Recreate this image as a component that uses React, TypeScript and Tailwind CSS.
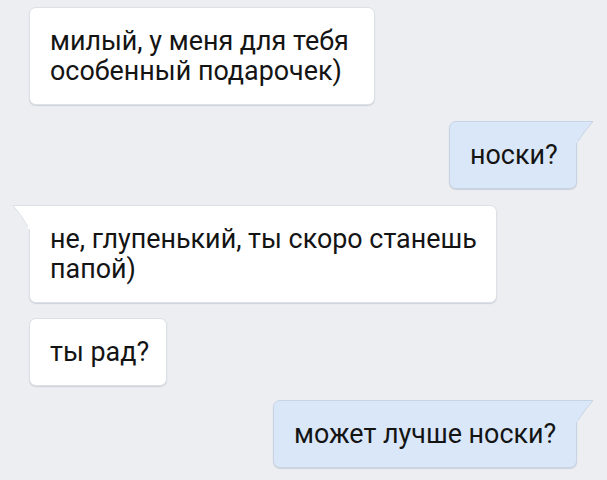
import type { ReactNode } from "react";

type Tail = "left" | "right" | "none";

// the source screenshot is a little stretched vertically, so the text is squeezed slightly to match
function Bubble({ mine, tail = "none", className = "", children }: { mine?: boolean; tail?: Tail; className?: string; children: ReactNode }) {
  const color = mine ? "bg-[#d9e7f8] border-[#c7d4e4]" : "bg-white border-[#dde1e7]";
  return (
    <div className={`relative ${mine ? "self-end" : "self-start"} ${className}`}>
      {tail === "right" && (
        <svg className="absolute top-0 right-[-17px]" width="18" height="22" viewBox="0 0 18 22">
          <path d="M0 0.5 H17 Q10 8 1 21.5 V0.5 Z" fill="#d9e7f8" stroke="#c7d4e4" strokeWidth="1" />
          <rect x="0" y="1" width="2" height="21" fill="#d9e7f8" />
        </svg>
      )}
      {tail === "left" && (
        <svg className="absolute top-0 left-[-17px]" width="18" height="24" viewBox="0 0 18 24">
          <path d="M18 0.5 H1 Q9 9 17 23.5 V0.5 Z" fill="#ffffff" stroke="#dde1e7" strokeWidth="1" />
          <rect x="16" y="1" width="2" height="23" fill="#ffffff" />
        </svg>
      )}
      <div
        className={`border ${color} rounded-[7px] ${tail === "right" ? "rounded-tr-none" : ""} ${tail === "left" ? "rounded-tl-none" : ""} shadow-[0_1px_1px_rgba(150,160,175,0.35)] pl-[20px] pt-[18px] pb-[18px] text-[28px] leading-[30px] text-[#141414] whitespace-nowrap`}
      >
        <span className="inline-block origin-left scale-x-[0.96]">{children}</span>
      </div>
    </div>
  );
}

export default function App() {
  return (
    <div className="w-[607px] h-[480px] overflow-hidden bg-[#edeef2] px-[29px] pt-[7px] flex flex-col gap-[14px] font-['Roboto',sans-serif]">
      <Bubble className="w-[346px]">
        милый, у меня для тебя
        <br />
        особенный подарочек)
      </Bubble>
      <Bubble mine tail="right" className="w-[128px] mr-[1px] mt-[2px]">носки?</Bubble>
      <Bubble tail="left" className="w-[468px] mt-[2px]">
        не, глупенький, ты скоро станешь
        <br />
        папой)
      </Bubble>
      <Bubble className="w-[138px] mt-[1px]">ты рад?</Bubble>
      <Bubble mine tail="right" className="w-[304px] mr-[1px]">может лучше носки?</Bubble>
    </div>
  );
}
